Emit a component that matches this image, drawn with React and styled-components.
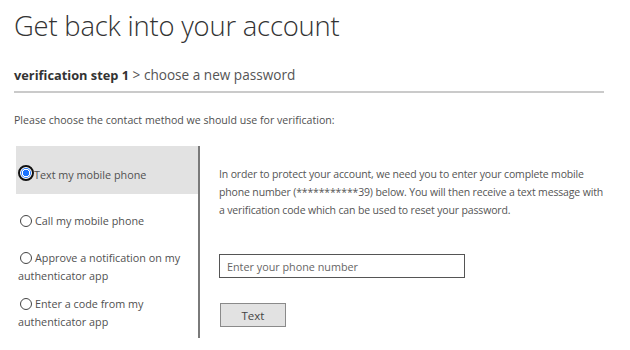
import { useState } from 'react'
import styled, { createGlobalStyle } from 'styled-components'

const GlobalStyle = createGlobalStyle`
  body {
    margin: 0;
    background: #fff;
    font-family: 'Open Sans', 'Liberation Sans', sans-serif;
    color: #505050;
  }
`

const Page = styled.div`
  padding: 8px 0 0 14px;
  width: 590px;
`

const Title = styled.h1`
  margin: 0;
  font-size: 27.4px;
  font-weight: 300;
  color: #333;
  letter-spacing: -0.2px;
  line-height: 36px;
`

const Steps = styled.div`
  margin-top: 21px;
  font-size: 13.6px;
  color: #555;
  padding-bottom: 7px;
  border-bottom: 2px solid #cacaca;
`

const Current = styled.b`
  font-size: 12.8px;
  color: #333;
  font-weight: 700;
`

const Intro = styled.p`
  margin: 20px 0 0;
  font-size: 10.6px;
  color: #505050;
`

const Columns = styled.div`
  display: flex;
  margin-top: 19px;
`

const Methods = styled.div`
  width: 184px;
  border-right: 2px solid #7a7a7a;
  padding-bottom: 7px;
`

const Method = styled.label`
  display: block;
  margin: ${p => p.$top}px 0 0 2px;
  padding: ${p => (p.$selected ? '19px 0 10px 2px' : '0 0 0 2px')};
  background: ${p => (p.$selected ? '#e2e2e2' : 'transparent')};
  font-size: 10.8px;
  line-height: 18px;
  color: #505050;
  cursor: pointer;
`

const Radio = styled.span`
  display: inline-block;
  vertical-align: -2px;
  box-sizing: border-box;
  width: ${p => (p.$on ? '16px' : '12px')};
  height: ${p => (p.$on ? '16px' : '12px')};
  margin: ${p => (p.$on ? '0' : '0 3px 0 2px')};
  border-radius: 50%;
  border: ${p => (p.$on ? '2px solid #111' : '1px solid #444')};
  background: #fff;
  position: relative;

  &::after {
    content: '';
    display: ${p => (p.$on ? 'block' : 'none')};
    position: absolute;
    inset: 1px;
    border-radius: 50%;
    background: radial-gradient(circle, #1a73ff 0 3px, #fff 3.5px 4px, #1a73ff 4.5px);
  }
`

const Detail = styled.div`
  flex: 1;
  padding: 19px 0 0 19px;
`

const Para = styled.p`
  margin: 0;
  font-size: 10.5px;
  letter-spacing: -0.15px;
  line-height: 18px;
  color: #555;
`

const PhoneInput = styled.input`
  display: block;
  box-sizing: border-box;
  margin-top: 35px;
  width: 246px;
  height: 24px;
  padding: 0 7px;
  border: 1px solid #555;
  font-family: inherit;
  font-size: 10.8px;
  color: #333;
  outline: none;

  &::placeholder {
    color: #666;
  }
`

const SendButton = styled.button`
  display: block;
  margin-top: 25px;
  margin-left: 1px;
  width: 66px;
  height: 24px;
  background: #e2e2e2;
  border: 1px solid #8a8a8a;
  font-family: inherit;
  font-size: 11.5px;
  color: #444;
  padding: 0;
`

const methods = [
  { id: 'text', label: 'Text my mobile phone', top: 0 },
  { id: 'call', label: 'Call my mobile phone', top: 18 },
  { id: 'notify', label: 'Approve a notification on my authenticator app', top: 19 },
  { id: 'code', label: 'Enter a code from my authenticator app', top: 10 }
]

const App = () => {
  const [method, setMethod] = useState('text')

  return (
    <Page>
      <GlobalStyle />
      <Title>Get back into your account</Title>
      <Steps>
        <Current>verification step 1</Current> &gt; choose a new password
      </Steps>
      <Intro>Please choose the contact method we should use for verification:</Intro>
      <Columns>
        <Methods>
          {methods.map(({ id, label, top }) => (
            <Method key={id} $top={top} $selected={method === id} onClick={() => setMethod(id)}>
              <Radio $on={method === id} />
              {label}
            </Method>
          ))}
        </Methods>
        <Detail>
          <Para>
            In order to protect your account, we need you to enter your complete mobile
            phone number (***********39) below. You will then receive a text message with a
            verification code which can be used to reset your password.
          </Para>
          <PhoneInput placeholder="Enter your phone number" />
          <SendButton type="button">Text</SendButton>
        </Detail>
      </Columns>
    </Page>
  )
}

export default App
